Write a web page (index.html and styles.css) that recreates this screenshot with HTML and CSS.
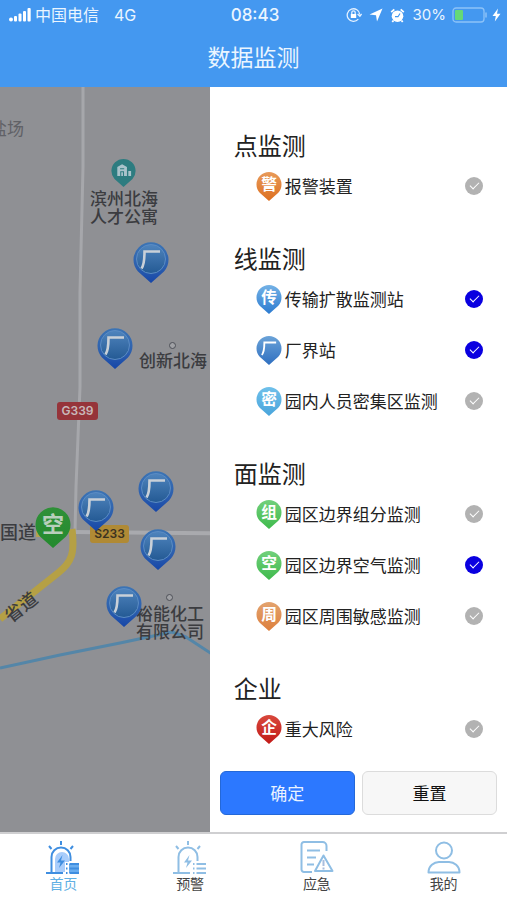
FILE: index.html
```html
<!DOCTYPE html>
<html lang="zh-CN">
<head>
<meta charset="utf-8">
<meta name="viewport" content="width=device-width, initial-scale=1">
<title>数据监测</title>
<link rel="stylesheet" href="styles.css">
</head>
<body>
<svg class="defs" width="0" height="0" aria-hidden="true">
  <defs>
    <linearGradient id="g-factory" x1="0" y1="0" x2="0" y2="1"><stop offset="0" stop-color="#6ba3d8"/><stop offset="1" stop-color="#2f6fc0"/></linearGradient>
    <linearGradient id="g-trans" x1="0" y1="0" x2="0" y2="1"><stop offset="0" stop-color="#74b2e6"/><stop offset="1" stop-color="#2c7bd0"/></linearGradient>
    <linearGradient id="g-crowd" x1="0" y1="0" x2="0" y2="1"><stop offset="0" stop-color="#6fc0ea"/><stop offset="1" stop-color="#4aa5dc"/></linearGradient>
    <linearGradient id="g-green" x1="0" y1="0" x2="0" y2="1"><stop offset="0" stop-color="#72d07c"/><stop offset="1" stop-color="#3fba4c"/></linearGradient>
    <linearGradient id="g-orange" x1="0" y1="0" x2="0" y2="1"><stop offset="0" stop-color="#e89a5a"/><stop offset="1" stop-color="#dd6f1f"/></linearGradient>
    <linearGradient id="g-tan" x1="0" y1="0" x2="0" y2="1"><stop offset="0" stop-color="#e3a36f"/><stop offset="1" stop-color="#dd7f3c"/></linearGradient>
    <linearGradient id="g-red" x1="0" y1="0" x2="0" y2="1"><stop offset="0" stop-color="#d8483c"/><stop offset="1" stop-color="#c21a18"/></linearGradient>
    <linearGradient id="g-mapblue" x1="0" y1="0" x2="0" y2="1"><stop offset="0" stop-color="#3c74b4"/><stop offset="0.6" stop-color="#2c5fae"/><stop offset="1" stop-color="#1646a8"/></linearGradient>
    <linearGradient id="g-disc" x1="0" y1="0" x2="0" y2="1"><stop offset="0" stop-color="#4f84bd"/><stop offset="1" stop-color="#245a94"/></linearGradient>
    <linearGradient id="g-mapgreen" x1="0" y1="0" x2="0" y2="1"><stop offset="0" stop-color="#2f9038"/><stop offset="1" stop-color="#248a2e"/></linearGradient>
    <path id="drop" d="M18 42L5 30.500A17.500 17.500 0 1 1 31 30.500Z"/>
    <symbol id="map-factory" viewBox="0 0 36 42">
      <use href="#drop" fill="url(#g-mapblue)"/>
      <circle cx="18" cy="18" r="14.500" fill="url(#g-disc)" stroke="#5b8cc4" stroke-width="1"/>
      <path d="M8.500 27.500C11 24 11.500 20 11.500 10.500H27" fill="none" stroke="#c9d0d8" stroke-width="2.600"/>
    </symbol>
    <symbol id="siren" viewBox="0 0 34 34">
      <path d="M0 32H17M5.500 32V16a9.500 9.500 0 0 1 19 0v4" fill="none" stroke="currentColor" stroke-width="2"/>
      <path d="M15 0v4M3 5l2.500 3M27 5l-2.500 3" fill="none" stroke="currentColor" stroke-width="2"/>
      <path d="M16.500 14L11 21.500h3.500L13 27l6-7.500h-4z" fill="currentColor"/>
      <path d="M20 23h1.500M23.500 23H33M20 27.500h1.500M23.500 27.500H33M20 32h1.500M23.500 32H33" fill="none" stroke="currentColor" stroke-width="2"/>
    </symbol>
  </defs>
</svg>

<div class="app">
  <header class="header">
    <div class="status">
      <div class="status-side">
        <svg class="signal" width="22" height="14" viewBox="0 0 22 14" fill="#fff" aria-hidden="true">
          <circle cx="2" cy="11.500" r="2"/><rect x="5" y="8" width="3" height="5.500" rx="1"/><rect x="9.500" y="5.500" width="3" height="8" rx="1"/><rect x="14" y="3" width="3" height="10.500" rx="1"/><rect x="18.500" y="0" width="3.200" height="13.500" rx="1"/>
        </svg>
        <span class="carrier">中国电信</span>
        <span class="network">4G</span>
      </div>
      <time class="clock">08:43</time>
      <div class="status-side status-end">
        <svg width="16" height="16" viewBox="0 0 16 16" fill="none" stroke="#e4f1ff" stroke-width="1.300" aria-hidden="true">
          <path d="M12.300 12.200A6.300 6.300 0 1 1 13.800 7.500M11.600 7l2.300 2.300L15.600 7"/>
          <rect x="4.800" y="7" width="5.400" height="4" fill="#fff" stroke="none"/><path d="M5.800 7V5.500a1.700 1.700 0 0 1 3.400 0V7"/>
        </svg>
        <svg class="arrow" width="14" height="14" viewBox="0 0 14 14" fill="#fff" aria-hidden="true"><path d="M13.500 .5L8 13.500 7 7.200 .5 6.500z"/></svg>
        <svg width="15" height="15" viewBox="0 0 15 15" aria-hidden="true">
          <circle cx="7.500" cy="8.200" r="5.800" fill="#fff"/><path d="M1.200 4.200L4.300 1.300M13.800 4.200L10.700 1.300M3.500 12.500L2.300 14M11.500 12.500l1.200 1.500" stroke="#fff" stroke-width="1.800"/><path d="M5 8.700h3L10 5.500" fill="none" stroke="#4498f0" stroke-width="1.200"/>
        </svg>
        <span class="percent">30%</span>
        <svg width="36" height="16" viewBox="0 0 36 16" aria-hidden="true">
          <rect x="1" y="1" width="31" height="14" rx="3" fill="none" stroke="#8cc2f8" stroke-width="1.300"/><rect x="3" y="3" width="8" height="10" rx="1" fill="#65d878"/><path d="M34 5.500v5" stroke="#8cc2f8" stroke-width="1.500"/>
        </svg>
        <svg width="9" height="14" viewBox="0 0 9 14" fill="#fff" aria-hidden="true"><path d="M6 .5L.5 8h3.300L2.800 13.500 8.500 5.700H5z"/></svg>
      </div>
    </div>
    <h1 class="title">数据监测</h1>
  </header>

  <main class="main">
    <section class="map" aria-label="地图">
      <svg class="roads" width="507" height="746" viewBox="0 0 507 746" fill="none" aria-hidden="true">
        <path d="M83 0V80L80 205V300L76 400L75 446" stroke="#a6a7ab" stroke-width="3"/>
        <path d="M72 445L507 449" stroke="#a9aaae" stroke-width="4"/>
        <path d="M36 447H50" stroke="#b5a152" stroke-width="6"/>
        <path d="M72 442C75 466 72 475 58 486L0 532" stroke="#b5a045" stroke-width="7"/>
        <path d="M0 581L60 568L120 556L172 545L186 550L212 567" stroke="#5486a8" stroke-width="3" stroke-linejoin="round"/>
      </svg>
      <span class="place faint salt">盐场</span>
      <svg class="mark apartment" width="25" height="29" viewBox="0 0 36 42" aria-hidden="true"><use href="#drop" fill="#2d7c80"/><path d="M9 26V13l7-4 7 4v13zM25 26v-7h4v7z" fill="#a9c3cb"/><path d="M13 15.500h6M14 26v-6h4v6" fill="none" stroke="#2d7c80" stroke-width="1.500"/></svg>
      <span class="place housing">滨州北海<br>人才公寓</span>
      <span class="dot dot-north"></span>
      <span class="place innovation">创新北海</span>
      <span class="shield national">G339</span>
      <span class="place guodao">国道</span>
      <span class="place shengdao">省道</span>
      <span class="shield provincial">S233</span>
      <span class="dot dot-south"></span>
      <span class="place chemical">裕能化工<br>有限公司</span>
      <svg class="mark factory-1" width="36" height="42" role="img" aria-label="厂界站"><use href="#map-factory"/></svg>
      <svg class="mark factory-2" width="36" height="42" role="img" aria-label="厂界站"><use href="#map-factory"/></svg>
      <svg class="mark factory-3" width="36" height="42" role="img" aria-label="厂界站"><use href="#map-factory"/></svg>
      <svg class="mark factory-4" width="36" height="42" role="img" aria-label="厂界站"><use href="#map-factory"/></svg>
      <svg class="mark factory-5" width="36" height="42" role="img" aria-label="厂界站"><use href="#map-factory"/></svg>
      <svg class="mark factory-6" width="36" height="42" role="img" aria-label="厂界站"><use href="#map-factory"/></svg>
      <svg class="mark air" width="36" height="42" viewBox="0 0 36 42"><use href="#drop" fill="url(#g-mapgreen)"/><text class="glyph glyph-map" x="18" y="26">空</text></svg>
    </section>

    <form class="drawer">
      <section class="group">
        <h2>点监测</h2>
        <label class="row"><svg class="pin" viewBox="0 0 36 42"><use href="#drop" fill="url(#g-orange)"/><text class="glyph" x="18" y="26">警</text></svg><span class="name">报警装置</span><input type="checkbox"></label>
      </section>
      <section class="group">
        <h2>线监测</h2>
        <label class="row"><svg class="pin" viewBox="0 0 36 42"><use href="#drop" fill="url(#g-trans)"/><text class="glyph" x="18" y="26">传</text></svg><span class="name">传输扩散监测站</span><input type="checkbox" checked></label>
        <label class="row"><svg class="pin" viewBox="0 0 36 42"><use href="#drop" fill="url(#g-factory)"/><path d="M8 28C11 24 11.500 20 11.500 10.500H28" fill="none" stroke="#fff" stroke-width="2.600"/></svg><span class="name">厂界站</span><input type="checkbox" checked></label>
        <label class="row"><svg class="pin" viewBox="0 0 36 42"><use href="#drop" fill="url(#g-crowd)"/><text class="glyph" x="18" y="26">密</text></svg><span class="name">园内人员密集区监测</span><input type="checkbox"></label>
      </section>
      <section class="group">
        <h2>面监测</h2>
        <label class="row"><svg class="pin" viewBox="0 0 36 42"><use href="#drop" fill="url(#g-green)"/><text class="glyph" x="18" y="26">组</text></svg><span class="name">园区边界组分监测</span><input type="checkbox"></label>
        <label class="row"><svg class="pin" viewBox="0 0 36 42"><use href="#drop" fill="url(#g-green)"/><text class="glyph" x="18" y="26">空</text></svg><span class="name">园区边界空气监测</span><input type="checkbox" checked></label>
        <label class="row"><svg class="pin" viewBox="0 0 36 42"><use href="#drop" fill="url(#g-tan)"/><text class="glyph" x="18" y="26">周</text></svg><span class="name">园区周围敏感监测</span><input type="checkbox"></label>
      </section>
      <section class="group">
        <h2>企业</h2>
        <label class="row"><svg class="pin" viewBox="0 0 36 42"><use href="#drop" fill="url(#g-red)"/><text class="glyph" x="18" y="26">企</text></svg><span class="name">重大风险</span><input type="checkbox"></label>
      </section>
      <div class="actions">
        <button class="button primary" type="button">确定</button>
        <button class="button" type="reset">重置</button>
      </div>
    </form>
  </main>

  <nav class="tabs">
    <a class="tab active" href="#home">
      <svg width="34" height="34" viewBox="0 0 34 34" aria-hidden="true"><path d="M9 31V18a7 7 0 0 1 14 0v3h-4v10z" fill="#a9cdfb"/><path d="M23 23h10v9H23z" fill="#6aaef0"/><use href="#siren"/></svg>
      <span>首页</span>
    </a>
    <a class="tab" href="#warning">
      <svg width="34" height="34" viewBox="0 0 34 34" aria-hidden="true"><use href="#siren"/></svg>
      <span>预警</span>
    </a>
    <a class="tab" href="#emergency">
      <svg width="34" height="34" viewBox="0 0 34 34" fill="none" stroke="currentColor" stroke-width="2" stroke-linejoin="round" aria-hidden="true">
        <path d="M12 31H4a2.500 2.500 0 0 1-2.500-2.500v-25A2.500 2.500 0 0 1 4 1h18.500A4 4 0 0 1 26.500 5v5M7 9.500h13M7 16.500h9M7 23.500h7"/>
        <path d="M23.500 14.500L32.500 30H15z"/><path d="M23.500 19v6M23.500 26.500v2" stroke="#a9bede"/>
      </svg>
      <span>应急</span>
    </a>
    <a class="tab" href="#mine">
      <svg width="34" height="34" viewBox="0 0 34 34" fill="none" stroke="currentColor" stroke-width="2" stroke-linejoin="round" aria-hidden="true">
        <circle cx="17" cy="9.500" r="8"/><path d="M1.500 31.500C1.500 25 7 21 12 21h10c5 0 10.500 4 10.500 10.500z"/>
      </svg>
      <span>我的</span>
    </a>
  </nav>
</div>
</body>
</html>
```
FILE: styles.css
```css
* { box-sizing: border-box; }

body {
  margin: 0;
  font-family: "Noto Sans CJK SC", sans-serif;
  color: #222;
  background: #fff;
}

.defs { position: absolute; }

.app {
  display: flex;
  flex-direction: column;
  min-height: 100vh;
}

/* Header */
.header {
  padding-bottom: 5px;
  background: #4498f0;
  color: #eaf5ff;
}

.status {
  display: grid;
  grid-template-columns: 1fr auto 1fr;
  align-items: center;
  height: 30px;
  padding: 0 6px 0 9px;
  font-size: 16px;
  line-height: 30px;
}

.status-side {
  display: flex;
  align-items: center;
  gap: 4px;
  white-space: nowrap;
}

.status-end { justify-content: flex-end; }
.status-end .arrow { margin: 0 3px; }
.carrier { line-height: 28px; padding-bottom: 2px; }
.network, .clock, .percent { font-family: Inter, sans-serif; }
.network { margin-left: 11px; }
.clock { font-size: 17px; font-weight: 500; }

.percent {
  margin: 0 2px 0 4px;
  font-size: 15px;
}

.title {
  margin: 0;
  font-size: 23px;
  font-weight: 400;
  line-height: 52px;
  text-align: center;
}

/* Map and drawer */
.main {
  display: grid;
  grid-template-columns: 12fr 17fr;
  flex: 1;
}

.map {
  position: relative;
  overflow: hidden;
  background: #8f9094;
  color: #3b3c40;
}

.roads, .mark, .place, .shield, .dot { position: absolute; }
.roads { left: 0; top: 0; }

.place {
  font-size: 17px;
  font-weight: 500;
  line-height: 18px;
  white-space: nowrap;
}

.faint { color: #606166; font-weight: 400; }
.salt { left: -10px; top: 32px; }
.housing { left: 90px; top: 102px; }
.innovation { left: 139px; top: 264px; }
.guodao { left: 0; top: 435px; font-size: 18px; }
.shengdao { left: 2px; top: 510px; font-size: 18px; transform: rotate(-38deg); }
.chemical { left: 136px; top: 517px; }

.apartment { left: 111px; top: 71px; }
.factory-1 { left: 133px; top: 154px; }
.factory-2 { left: 97px; top: 240px; }
.factory-3 { left: 138px; top: 383px; }
.factory-4 { left: 78px; top: 402px; }
.factory-5 { left: 140px; top: 441px; }
.factory-6 { left: 106px; top: 498px; }
.air { left: 35px; top: 419px; }

.shield {
  height: 18px;
  border-radius: 3px;
  font: 600 12px/18px Inter, sans-serif;
  text-align: center;
}

.national {
  left: 57px;
  top: 315px;
  width: 41px;
  background: #96343a;
  color: #c9b9ba;
}

.provincial {
  left: 90px;
  top: 438px;
  width: 39px;
  background: #b08a35;
  color: #3b3220;
}

.dot {
  width: 7px;
  height: 7px;
  border: 1px solid #4e5058;
  border-radius: 50%;
  background: #a0a1a5;
}

.dot-north { left: 169px; top: 255px; }
.dot-south { left: 166px; top: 507px; }

.glyph {
  font-size: 22px;
  font-weight: 700;
  text-anchor: middle;
  fill: #fff;
}

.glyph-map { fill: #b9cfbc; }

.drawer {
  display: flex;
  flex-direction: column;
  gap: 32px;
  padding: 43px 10px 17px;
  background: #fff;
}

.group h2 {
  margin: 0 0 0 14px;
  font-size: 24px;
  font-weight: 400;
  line-height: 30px;
}

.row {
  display: flex;
  align-items: center;
  height: 51px;
  padding: 0 14px 0 36px;
  font-size: 17px;
  white-space: nowrap;
}

.pin {
  width: 26px;
  height: 30px;
  margin-right: 3px;
}

.name {
  flex: 1;
  padding-bottom: 1px;
}

.row input {
  appearance: none;
  display: grid;
  place-items: center;
  width: 18px;
  height: 18px;
  margin: 0;
  border-radius: 50%;
  background: #b2b2b2;
}

.row input::before {
  content: "";
  width: 8px;
  height: 4px;
  border: solid #fff;
  border-width: 0 0 1px 1px;
  transform: translateY(-1px) rotate(-45deg);
}

.row input:checked { background: #0a00e0; }

.actions {
  display: flex;
  gap: 7px;
  margin-top: -15px;
}

.button {
  flex: 1;
  height: 44px;
  padding: 0 0 2px;
  border: 1px solid #dcdcdc;
  border-radius: 6px;
  background: #f7f7f7;
  color: #111;
  font: inherit;
  font-size: 17px;
}

.primary {
  border-color: #2468d8;
  background: #2c78ff;
  color: #eaf3ff;
}

/* Bottom tabs */
.tabs {
  display: grid;
  grid-template-columns: repeat(4, 1fr);
  height: 68px;
  padding-top: 7px;
  border-top: 2px solid #cfcfd1;
  background: #fff;
}

.tab {
  display: flex;
  flex-direction: column;
  align-items: center;
  color: #8fbee4;
  font-size: 14px;
  line-height: 16px;
  text-decoration: none;
}

.tab span { color: #444; }
.active { color: #3f8ee0; }
.active span { color: #5fb0e4; }
```
